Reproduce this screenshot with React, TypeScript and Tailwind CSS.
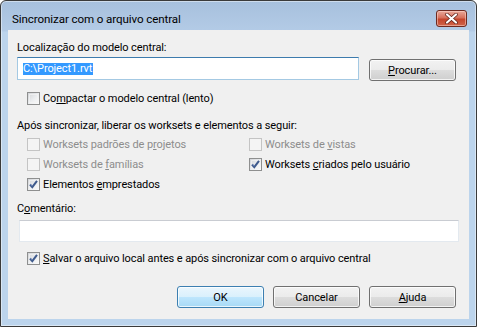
import React from "react";

const F = "font-['Roboto',sans-serif] tracking-[-0.1px]";

function Check({ checked = false, disabled = false }: { checked?: boolean; disabled?: boolean }) {
  return (
    <span
      className={
        "relative inline-flex w-[13px] h-[13px] shrink-0 border items-center justify-center " +
        (disabled
          ? "border-[#c4c4c4] bg-[#f4f4f4]"
          : "border-[#8e8f8f] bg-[linear-gradient(135deg,#d2d4d8_0%,#eceef0_55%,#fbfbfb_100%)]")
      }
    >
      <span className={"absolute inset-[1px] border " + (disabled ? "border-[#f4f4f4]" : "border-[#f4f4f4]/70")} />
      {checked && (
        <svg width="11" height="11" viewBox="0 0 11 11" className="relative">
          <path d="M2 5.5 L4.3 8.2 L9 1.8" fill="none" stroke="#3f5a8c" strokeWidth="2" strokeLinejoin="miter" />
          <path d="M2.6 5.2 L4.3 7.1" fill="none" stroke="#8fa8d8" strokeWidth="0.7" />
        </svg>
      )}
    </span>
  );
}

function CheckRow({
  children,
  checked,
  disabled,
  className = "",
}: {
  children: React.ReactNode;
  checked?: boolean;
  disabled?: boolean;
  className?: string;
}) {
  return (
    <div className={"flex items-center gap-[3px] " + className}>
      <Check checked={checked} disabled={disabled} />
      <span className={"text-[11px] leading-[15px] whitespace-nowrap " + (disabled ? "text-[#8d8d8d]" : "text-black")}>
        {children}
      </span>
    </div>
  );
}

function Btn({ children, def = false }: { children: React.ReactNode; def?: boolean }) {
  return (
    <div
      className={
        "w-[87px] h-[22px] rounded-[3px] border flex items-center justify-center text-[11px] leading-[15px] text-black shadow-[inset_0_0_0_1px_rgba(255,255,255,0.75)] " +
        (def
          ? "border-[#3c7fb1] bg-[linear-gradient(180deg,#eaf6fd_0%,#d9f0fc_50%,#bee6fd_50%,#a7d9f5_100%)]"
          : "border-[#707070] bg-[linear-gradient(180deg,#f2f2f2_0%,#ebebeb_50%,#dddddd_50%,#cfcfcf_100%)]")
      }
    >
      {children}
    </div>
  );
}

export default function App() {
  return (
    <div className={"w-[477px] h-[327px] " + F}>
      <div className="w-full h-full rounded-t-[6px] border border-[#3a3a3a] bg-[linear-gradient(180deg,#a7c0dd_0px,#b3cbe6_30px,#bcd4ec_31px,#bcd4ec_100%)] flex flex-col shadow-[inset_0_0_0_1px_rgba(255,255,255,0.45)]">
        <div className="h-[29px] flex items-start justify-between pl-[11px] pr-[9px]">
          <div className="pt-[10px] text-[11.6px] leading-[16px] text-black">Sincronizar com o arquivo central</div>
          <div className="mt-[9px] w-[31px] h-[17px] rounded-[3px] border border-[#6e2a20] bg-[linear-gradient(180deg,#e9a99b_0%,#d7705c_45%,#c4452c_55%,#d0644a_100%)] shadow-[inset_0_0_0_1px_rgba(255,220,210,0.5)] flex items-center justify-center">
            <svg width="13" height="11" viewBox="0 0 13 11">
              <path d="M2 1.5 L11 9.5 M11 1.5 L2 9.5" stroke="#5a1e16" strokeWidth="3.6" strokeLinecap="round" />
              <path d="M2 1.5 L11 9.5 M11 1.5 L2 9.5" stroke="#ffffff" strokeWidth="2.2" strokeLinecap="round" />
            </svg>
          </div>
        </div>
        <div className="mx-[7px] h-[289px] bg-[#f0f0f0] flex flex-col pl-[9px] pr-[13px] pt-[10px] text-black">
          <div className="text-[11px] leading-[15px]">Localização do modelo central:</div>
          <div className="flex items-start gap-[10px] mt-[2px]">
            <div className="w-[342px] h-[23px] border border-[#a4c9e3] border-t-[#3d7bad] bg-white flex items-center pl-[5px]">
              <span className="bg-[#3399ff] text-white text-[11px] leading-[12px] h-[12px] flex items-center pr-[1px]">C:\Project1.rvt</span>
            </div>
            <div className="mt-[2px]">
              <Btn>
                <span>
                  <u>P</u>rocurar...
                </span>
              </Btn>
            </div>
          </div>
          <CheckRow className="mt-[10px] ml-[10px]">
            Co<u>m</u>pactar o modelo central (lento)
          </CheckRow>
          <div className="mt-[12px] text-[11px] leading-[15px]">Após sincronizar, liberar os worksets e elementos a seguir:</div>
          <div className="mt-[1px] ml-[10px] grid grid-cols-[222px_1fr] auto-rows-[20px] items-center">
            <CheckRow disabled>
              Worksets padrões de p<u>r</u>ojetos
            </CheckRow>
            <CheckRow disabled>
              Worksets de <u>v</u>istas
            </CheckRow>
            <CheckRow disabled>
              Worksets de <u>f</u>amílias
            </CheckRow>
            <CheckRow checked>
              Worksets <u>c</u>riados pelo usuário
            </CheckRow>
            <CheckRow checked>
              Elementos <u>e</u>mprestados
            </CheckRow>
          </div>
          <div className="mt-[7px] text-[11px] leading-[15px]">
            C<u>o</u>mentário:
          </div>
          <div className="mt-[4px] ml-[2px] w-[440px] h-[22px] bg-white border border-[#e3e9ef] border-t-[#c9ccd2]" />
          <CheckRow checked className="mt-[9px] ml-[10px]">
            <u>S</u>alvar o arquivo local antes e após sincronizar com o arquivo central
          </CheckRow>
          <div className="mt-[20px] flex justify-end gap-[9px]">
            <Btn def>OK</Btn>
            <Btn>Cancelar</Btn>
            <Btn>
              <span>
                <u>A</u>juda
              </span>
            </Btn>
          </div>
        </div>
      </div>
    </div>
  );
}
